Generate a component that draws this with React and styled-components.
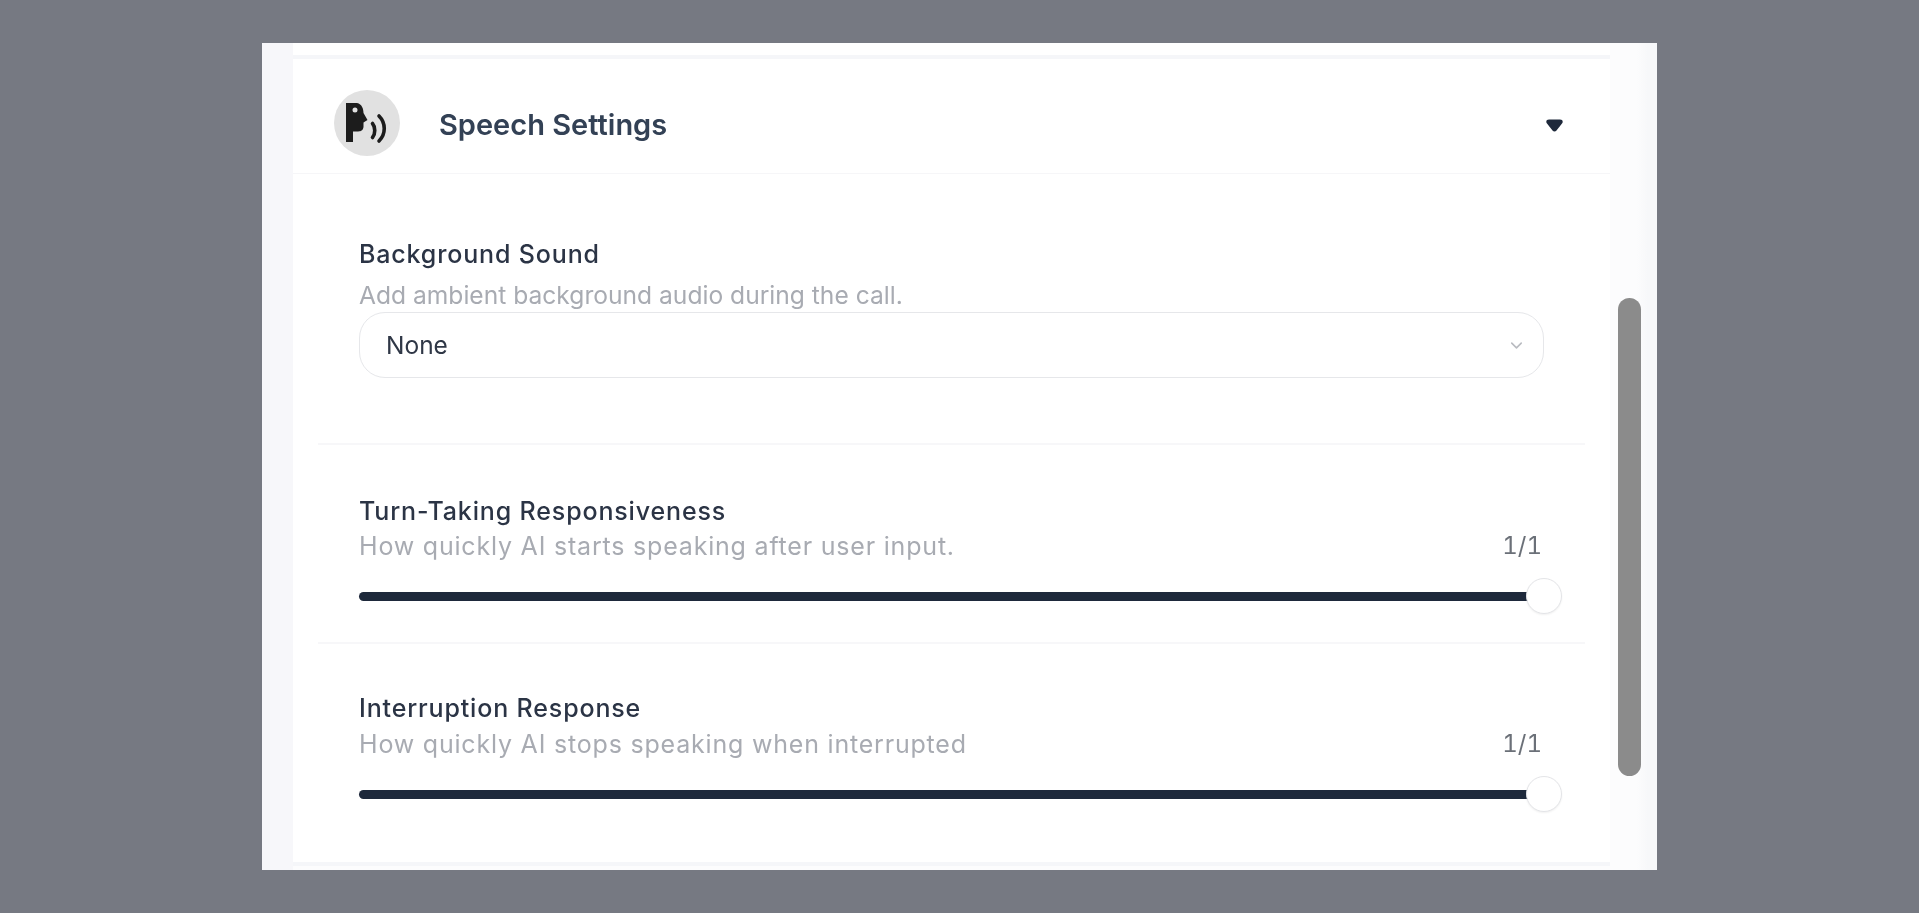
import React from 'react'
import styled, { createGlobalStyle } from 'styled-components'
import { ChevronDown } from 'lucide-react'

const GlobalStyle = createGlobalStyle`
  html, body {
    margin: 0;
    padding: 0;
    background: #767982;
  }
  body {
    font-family: Inter, "Noto Sans", sans-serif;
    -webkit-font-smoothing: antialiased;
  }
`

const Page = styled.div`
  height: 913px;
  box-sizing: border-box;
  padding: 43px 0;
  display: flex;
  justify-content: center;
  overflow: hidden;
`

const Modal = styled.div`
  width: 1395px;
  height: 827px;
  display: flex;
  background: linear-gradient(90deg, #f7f7fa 31px, #fcfcfd 31px, #fcfcfd 1375px, #f7f8fa 1386px);
  overflow: hidden;
  filter: blur(0.5px);
`

const Scroller = styled.div`
  width: 1317px;
  margin-left: 31px;
  display: flex;
  flex-direction: column;
  flex-shrink: 0;
`

const PrevSectionEnd = styled.div`
  height: 12px;
  background: #fff;
  border-bottom: 4px solid #f5f6f9;
`

const Section = styled.section`
  background: #fff;
  border-bottom: 4px solid #f5f6f9;
`

const SectionHeader = styled.header`
  height: 115px;
  box-sizing: border-box;
  padding: 14px 47px 0 41px;
  display: flex;
  align-items: center;
  border-bottom: 1px solid #f6f6f8;
`

const IconCircle = styled.div`
  width: 66px;
  height: 66px;
  border-radius: 50%;
  background: #e1e1e1;
  flex-shrink: 0;
`

const SectionTitle = styled.h2`
  margin: 4px 0 0 39px;
  flex: 1;
  font-size: 29px;
  line-height: 34px;
  font-weight: 600;
  color: #334155;
`

const CaretWrap = styled.div`
  display: flex;
  margin-top: 5px;
`

const Row = styled.div`
  margin: 0 25px;
  padding: ${p => p.$top}px 41px ${p => p.$bottom}px 41px;
  border-bottom: ${p => (p.$last ? 'none' : '2px solid #f7f7f9')};
`

const Label = styled.div`
  font-size: 25px;
  letter-spacing: 0.85px;
  line-height: 30px;
  font-weight: 500;
  color: #2b3445;
`

const Hint = styled.div`
  margin-top: ${p => p.$gap}px;
  font-size: ${p => p.$size}px;
  letter-spacing: ${p => p.$spacing || 0}px;
  line-height: 30px;
  color: #a8abb2;
`

const HintRow = styled.div`
  display: flex;
  justify-content: space-between;
  align-items: flex-end;
`

const Value = styled.span`
  font-size: 24px;
  line-height: 30px;
  font-variant-numeric: tabular-nums;
  color: #6b7078;
  margin-right: 2px;
`

const SelectBox = styled.div`
  margin-top: 2px;
  height: 66px;
  box-sizing: border-box;
  padding: 0 17px 0 26px;
  display: flex;
  align-items: center;
  justify-content: space-between;
  border: 1.5px solid #e6e7ea;
  border-radius: 26px;
  font-size: 24.5px;
  color: #2f3746;
  svg {
    color: #b9bbc1;
  }
`

const SliderWrap = styled.div`
  position: relative;
  margin-top: ${p => p.$gap}px;
  height: 36px;
  display: flex;
  align-items: center;
`

const Track = styled.div`
  width: 100%;
  height: 9px;
  border-radius: 5px;
  background: #1e293b;
`

const Thumb = styled.div`
  position: absolute;
  right: -18px;
  top: 0;
  width: 36px;
  height: 36px;
  box-sizing: border-box;
  border-radius: 50%;
  background: #fff;
  border: 1.5px solid #e4e5e8;
  box-shadow: 0 1px 2px rgba(0, 0, 0, 0.06);
`

const Gutter = styled.div`
  flex: 1;
  padding: 255px 16px 0 8px;
`

const ScrollThumb = styled.div`
  height: 478px;
  border-radius: 12px;
  background: #8b8b8b;
`

const SpeechIcon = () => (
  <svg width="66" height="66" viewBox="0 0 66 66">
    <path
      fillRule="evenodd"
      fill="#1c1c1c"
      d="M12 13H23C28 14 29.5 19 29.5 23L33.5 30L29.5 32.5V37C29 41 26 41.5 23 41.5H19V52H12ZM21 17.5A2.5 2.5 0 1 0 21 22.5A2.5 2.5 0 1 0 21 17.5Z"
    />
    <path d="M38.5 33.5C41.5 37 41.5 44 38.5 47.5" fill="none" stroke="#1c1c1c" strokeWidth="3.6" strokeLinecap="round" />
    <path d="M45 26C52 33 52 44 45 51" fill="none" stroke="#1c1c1c" strokeWidth="3.6" strokeLinecap="round" />
  </svg>
)

const CaretIcon = () => (
  <svg width="17" height="13" viewBox="0 0 17 13">
    <path d="M3 0.5H14C16.5 0.5 17.5 2.5 16 4.5L10.5 11.5C9.5 12.8 7.5 12.8 6.5 11.5L1 4.5C-0.5 2.5 0.5 0.5 3 0.5Z" fill="#1e293b" />
  </svg>
)

const Slider = ({ gap }) => (
  <SliderWrap $gap={gap}>
    <Track />
    <Thumb />
  </SliderWrap>
)

export default function App() {
  return (
    <>
      <GlobalStyle />
      <Page>
        <Modal>
          <Scroller>
            <PrevSectionEnd />
            <Section>
              <SectionHeader>
                <IconCircle>
                  <SpeechIcon />
                </IconCircle>
                <SectionTitle>Speech Settings</SectionTitle>
                <CaretWrap>
                  <CaretIcon />
                </CaretWrap>
              </SectionHeader>
              <Row $top={65} $bottom={65}>
                <Label>Background Sound</Label>
                <Hint $gap={11} $size={24.6}>Add ambient background audio during the call.</Hint>
                <SelectBox>
                  None
                  <ChevronDown size={19} strokeWidth={2} />
                </SelectBox>
              </Row>
              <Row $top={51} $bottom={28}>
                <Label>Turn-Taking Responsiveness</Label>
                <HintRow>
                  <Hint $gap={5} $size={25} $spacing={0.8}>How quickly AI starts speaking after user input.</Hint>
                  <Value>1/1</Value>
                </HintRow>
                <Slider gap={17} />
              </Row>
              <Row $top={49} $bottom={50} $last>
                <Label>Interruption Response</Label>
                <HintRow>
                  <Hint $gap={6} $size={25} $spacing={0.8}>How quickly AI stops speaking when interrupted</Hint>
                  <Value>1/1</Value>
                </HintRow>
                <Slider gap={17} />
              </Row>
            </Section>
          </Scroller>
          <Gutter>
            <ScrollThumb />
          </Gutter>
        </Modal>
      </Page>
    </>
  )
}
